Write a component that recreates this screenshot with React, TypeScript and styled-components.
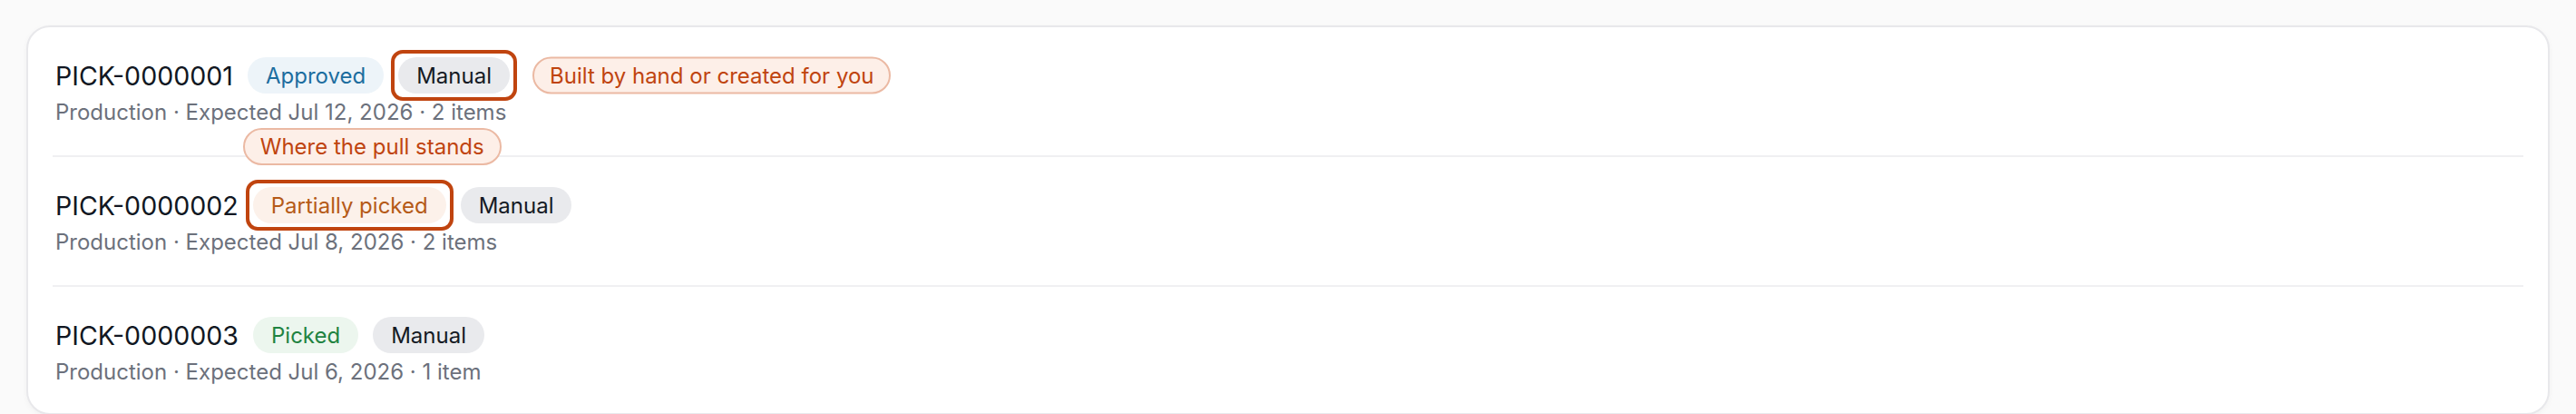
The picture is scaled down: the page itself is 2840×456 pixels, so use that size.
import React from 'react'
import styled, { createGlobalStyle } from 'styled-components'

type Tone = 'approved' | 'partial' | 'picked' | 'manual'

type PickRow = {
  id: string
  status: { label: string; tone: Tone }
  meta: string
  highlight?: 'status' | 'source'
  note?: string
}

const picks: PickRow[] = [
  {
    id: 'PICK-0000001',
    status: { label: 'Approved', tone: 'approved' },
    meta: 'Production · Expected Jul 12, 2026 · 2 items',
    highlight: 'source',
    note: 'Built by hand or created for you',
  },
  {
    id: 'PICK-0000002',
    status: { label: 'Partially picked', tone: 'partial' },
    meta: 'Production · Expected Jul 8, 2026 · 2 items',
    highlight: 'status',
    note: 'Where the pull stands',
  },
  {
    id: 'PICK-0000003',
    status: { label: 'Picked', tone: 'picked' },
    meta: 'Production · Expected Jul 6, 2026 · 1 item',
  },
]

const toneColors: Record<Tone, { bg: string; fg: string }> = {
  approved: { bg: '#edf4f9', fg: '#1c6d9f' },
  partial: { bg: '#fcf1ea', fg: '#b55a17' },
  picked: { bg: '#ecf6ee', fg: '#1f8341' },
  manual: { bg: '#e9eaed', fg: '#151a24' },
}

const App = () => {
  const renderBadge = (label: string, tone: Tone, marked: boolean, note?: string) => {
    const badge = <Badge $tone={tone}>{label}</Badge>
    if (!marked) return badge
    return (
      <Marked>
        {badge}
        {note && <Callout $place={tone === 'manual' ? 'right' : 'top'}>{note}</Callout>}
      </Marked>
    )
  }

  return (
    <Page>
      <GlobalStyle />
      <Card>
        {picks.map((pick) => (
          <Row key={pick.id}>
            <RowHeader>
              <Title>{pick.id}</Title>
              {renderBadge(pick.status.label, pick.status.tone, pick.highlight === 'status', pick.note)}
              {renderBadge('Manual', 'manual', pick.highlight === 'source', pick.note)}
            </RowHeader>
            <Meta>{pick.meta}</Meta>
          </Row>
        ))}
      </Card>
    </Page>
  )
}

const GlobalStyle = createGlobalStyle`
  html, body {
    margin: 0;
    padding: 0;
    background: #fafafa;
  }
  body {
    font-family: Inter, "Noto Sans", "Liberation Sans", sans-serif;
    -webkit-font-smoothing: antialiased;
  }
`

const Page = styled.div`
  padding: 28px 29px 0;
`

const Card = styled.div`
  background: #ffffff;
  border: 2px solid #e8e8eb;
  border-radius: 26px;
  padding: 0 27px;
  box-shadow: 0 2px 6px rgba(0, 0, 0, 0.04);
`

const Row = styled.div`
  padding: 33px 0 32px 3px;
  border-bottom: 2px solid #f0f0f2;

  &:last-child {
    border-bottom: none;
    padding-bottom: 30px;
  }
`

const RowHeader = styled.div`
  display: flex;
  align-items: center;
  gap: 16px;
  height: 40px;
`

const Title = styled.span`
  font-size: 28.6px;
  color: #111722;
`

const Badge = styled.span<{ $tone: Tone }>`
  display: inline-flex;
  align-items: center;
  height: 40px;
  padding: 0 20px;
  border-radius: 999px;
  font-size: 24px;
  background: ${({ $tone }) => toneColors[$tone].bg};
  color: ${({ $tone }) => toneColors[$tone].fg};
  white-space: nowrap;
`

const Marked = styled.span`
  position: relative;
  display: inline-flex;

  &::after {
    content: '';
    position: absolute;
    inset: -8px;
    border: 4px solid #c0440f;
    border-radius: 13px;
    pointer-events: none;
  }
`

const Callout = styled.span<{ $place: 'right' | 'top' }>`
  position: absolute;
  display: inline-flex;
  align-items: center;
  height: 41px;
  box-sizing: border-box;
  padding: 0 17px;
  border-radius: 999px;
  border: 2px solid #ebb9a3;
  background: #fdefe8;
  color: #c0440f;
  font-size: 24px;
  white-space: nowrap;
  ${({ $place }) =>
    $place === 'right'
      ? 'left: calc(100% + 25px); top: 50%; transform: translateY(-50%);'
      : 'left: -11px; bottom: calc(100% + 24px);'}
`

const Meta = styled.div`
  margin-top: 6px;
  font-size: 24px;
  line-height: 30px;
  color: #6c717c;
`

export default App
